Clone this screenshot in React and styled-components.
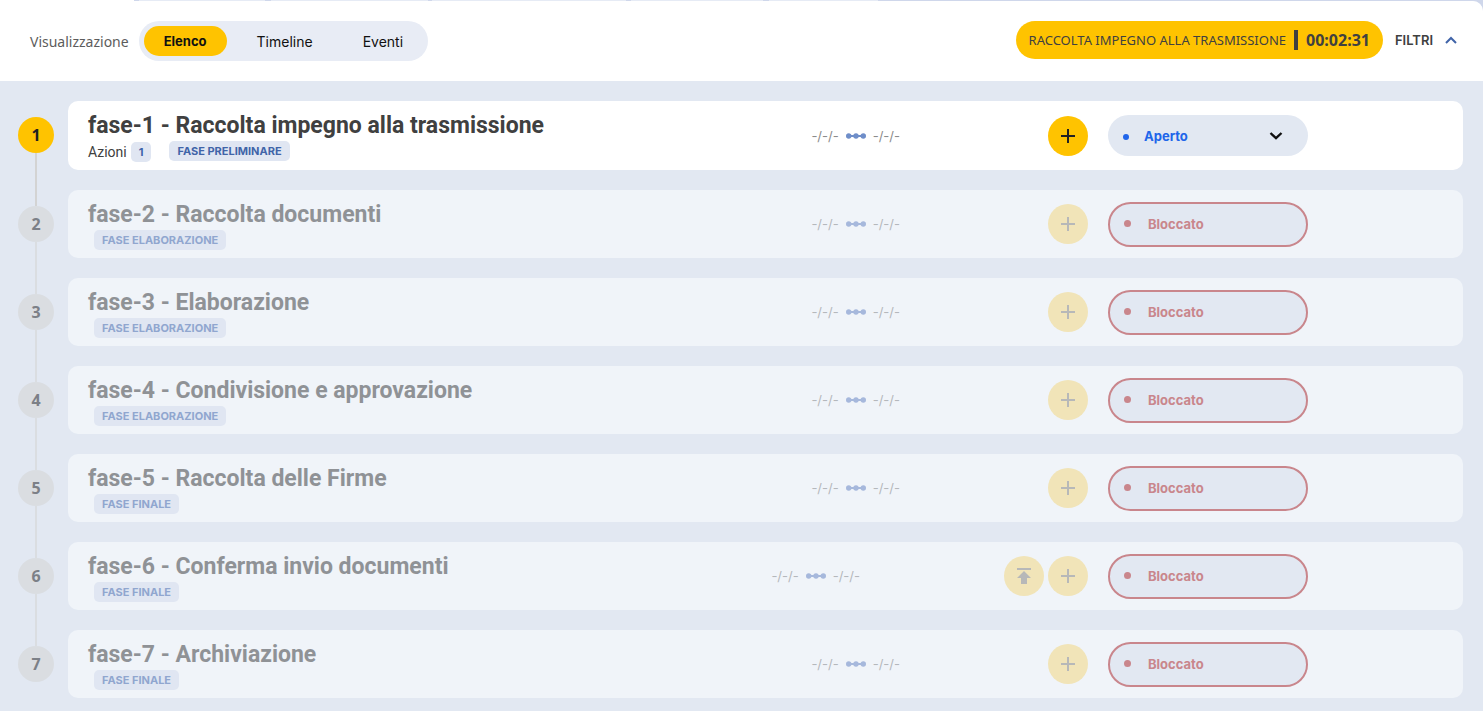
import React, { useState } from "react";
import styled, { createGlobalStyle } from "styled-components";

const fonts = {
  ui: 'Inter, "Liberation Sans", sans-serif',
  text: 'Roboto, "Liberation Sans", sans-serif',
  label: '"Noto Sans", "Open Sans", sans-serif',
};

const GlobalStyle = createGlobalStyle`
  *, *::before, *::after { box-sizing: border-box; }
  body {
    margin: 0;
    background: #cfd7eb;
    color: #404040;
    font-family: ${fonts.ui};
    font-size: 13px;
  }
  button, select { font: inherit; color: inherit; }
`;

const Page = styled.div`
  display: flex;
  flex-direction: column;
  min-height: 100vh;
`;

const TabStrip = styled.div`
  display: flex;
  height: 1px;
`;

const TabEdge = styled.span`
  width: ${(p) => p.$width}px;
  background: ${(p) => p.$tone};
`;

const Panel = styled.main`
  flex: 1;
  background: #e2e8f2;
  border-radius: 0 10px 6px 6px;
  overflow: hidden;
`;

const Header = styled.header`
  display: flex;
  justify-content: space-between;
  padding: 20px 26px 20px 30px;
  background: #fff;
`;

const HeaderGroup = styled.div`
  display: flex;
  align-items: center;
  gap: ${(p) => p.$gap}px;
  height: ${(p) => p.$height}px;
`;

const ViewLabel = styled.span`
  font-family: ${fonts.label};
  font-size: 14px;
  color: #5c5c5c;
`;

const Segmented = styled.div`
  display: flex;
  gap: 10px;
  padding: 5px;
  border-radius: 20px;
  background: #e8ecf5;
`;

const Segment = styled.button`
  height: 30px;
  padding: 0 20px;
  border: 0;
  border-radius: 15px;
  background: ${(p) => (p.$active ? "#ffc300" : "transparent")};
  color: #111;
  font-size: ${(p) => (p.$active ? 13 : 14)}px;
  font-weight: ${(p) => (p.$active ? 700 : 400)};
  cursor: pointer;
`;

const TimerPill = styled.div`
  display: flex;
  align-items: center;
  gap: 8px;
  height: 38px;
  padding: 0 13px;
  border-radius: 19px;
  background: #ffc300;
`;

const TimerLabel = styled.span`
  font-family: ${fonts.label};
  font-size: 13px;
`;

const TimerBar = styled.span`
  width: 4px;
  height: 20px;
  background: #404040;
`;

const TimerValue = styled.span`
  font-family: ${fonts.label};
  font-size: 16px;
  font-weight: 700;
`;

const FilterButton = styled.button`
  display: flex;
  align-items: center;
  gap: 12px;
  padding: 0;
  border: 0;
  background: none;
  font-weight: 600;
  cursor: pointer;
`;

const PhaseList = styled.ol`
  margin: 0;
  padding: 20px 20px 0 18px;
  list-style: none;
`;

const Phase = styled.li`
  display: flex;
  gap: 14px;
`;

const StepColumn = styled.div`
  display: flex;
  flex-direction: column;
  align-items: center;
  width: 36px;
`;

const StepLine = styled.span`
  width: 2px;
  height: 16px;
  flex-grow: ${(p) => (p.$grow ? 1 : 0)};
  background: ${(p) => (p.$hidden ? "transparent" : p.$strong ? "#d3d3d3" : "#dadde1")};
`;

const StepCircle = styled.span`
  display: flex;
  align-items: center;
  justify-content: center;
  width: 36px;
  height: 36px;
  border-radius: 50%;
  background: ${(p) => (p.$active ? "#ffc300" : "#dadde1")};
  color: ${(p) => (p.$active ? "#222" : "#7c8087")};
  font-family: ${fonts.label};
  font-size: 16px;
  font-weight: 700;
`;

const Card = styled.article`
  display: flex;
  flex: 1;
  align-items: center;
  margin-bottom: 20px;
  padding: 0 155px 0 20px;
  border-radius: 10px;
  background: ${(p) => (p.$active ? "#fff" : "#f0f4f9")};
`;

const Summary = styled.div`
  display: flex;
  flex: 1;
  flex-direction: column;
  padding: 10px 0 8px;
`;

const Title = styled.h2`
  margin: 0;
  color: ${(p) => (p.$active ? "#404040" : "#8f9296")};
  font-family: ${fonts.text};
  font-size: 23px;
  font-weight: 700;
  line-height: 30px;
`;

const Meta = styled.div`
  display: flex;
  align-items: flex-start;
  padding-left: ${(p) => (p.$indent ? 6 : 0)}px;
  gap: 18px;
`;

const Actions = styled.span`
  display: flex;
  align-items: center;
  gap: 4px;
  height: 21px;
  font-family: ${fonts.text};
  font-size: 14px;
`;

const Badge = styled.span`
  padding: 0 8px;
  border-radius: 5px;
  background: #e0e6f2;
  color: ${(p) => (p.$active ? "#4064a8" : "#90a6cf")};
  font-family: ${fonts.ui};
  font-size: 11px;
  font-weight: 700;
  line-height: 20px;
`;

const Dates = styled.div`
  display: flex;
  align-items: center;
  gap: 7px;
  margin-right: 144px;
  color: ${(p) => (p.$active ? "#8c8c8c" : "#b5b8bc")};
  font-size: 13px;
`;

const ButtonSet = styled.div`
  display: flex;
  justify-content: flex-end;
  gap: 4px;
  min-width: 44px;
  margin-right: 20px;
`;

const RoundButton = styled.button`
  display: flex;
  align-items: center;
  justify-content: center;
  width: 40px;
  height: 40px;
  padding: 0;
  border: 0;
  border-radius: 50%;
  background: ${(p) => (p.disabled ? "#f1e4b8" : "#ffc300")};
  color: ${(p) => (p.disabled ? "#b7b8b8" : "#222")};
`;

const StatusBox = styled.div`
  position: relative;
  width: 200px;
`;

const StatusSelect = styled.select`
  display: block;
  width: 100%;
  height: ${(p) => (p.disabled ? 45 : 41)}px;
  padding: 0 ${(p) => (p.disabled ? 38 : 36)}px;
  border: ${(p) => (p.disabled ? "2px solid #c9868c" : "0")};
  border-radius: 23px;
  background: #e2e8f2;
  color: ${(p) => (p.disabled ? "#c9868c" : "#2065ea")};
  font-weight: 700;
  opacity: 1;
  appearance: none;
`;

const StatusDot = styled.span`
  position: absolute;
  top: 50%;
  left: ${(p) => (p.$active ? 15 : 16)}px;
  width: ${(p) => (p.$active ? 6 : 7)}px;
  height: ${(p) => (p.$active ? 6 : 7)}px;
  margin-top: ${(p) => (p.$active ? -2 : -4)}px;
  border-radius: 50%;
  background: ${(p) => (p.$active ? "#2065ea" : "#c9868c")};
  pointer-events: none;
`;

const StatusArrow = styled.span`
  position: absolute;
  top: 0;
  right: 25px;
  bottom: 0;
  display: flex;
  align-items: center;
  pointer-events: none;
`;

const ChevronUp = () => (
  <svg width="12" height="8" viewBox="0 0 12 8" fill="none" stroke="#4064a8" strokeWidth="2" aria-hidden="true">
    <path d="M1 7l5-5 5 5" />
  </svg>
);

const ChevronDown = () => (
  <svg width="14" height="8" viewBox="0 0 14 8" fill="none" stroke="#111" strokeWidth="2.4" aria-hidden="true">
    <path d="M1.5 1l5.5 5.2L12.5 1" />
  </svg>
);

const PlusIcon = () => (
  <svg width="16" height="16" viewBox="0 0 16 16" fill="none" stroke="currentColor" strokeWidth="2" aria-hidden="true">
    <path d="M8 1v14M1 8h14" />
  </svg>
);

const UploadIcon = () => (
  <svg width="16" height="18" viewBox="0 0 16 18" fill="currentColor" aria-hidden="true">
    <path d="M1 1h14v2H1zM8 4l7 7h-4v6H5v-6H1z" />
  </svg>
);

const RangeIcon = ({ active }) => (
  <svg width="20" height="6" viewBox="0 0 20 6" fill={active ? "#6f8ec9" : "#a6b8dc"} aria-hidden="true">
    <path d="M2 2h16v2H2z" />
    <circle cx="2.7" cy="3" r="2.7" />
    <circle cx="10" cy="3" r="2.7" />
    <circle cx="17.3" cy="3" r="2.7" />
  </svg>
);

const views = ["Elenco", "Timeline", "Eventi"];

const strip = [
  [134, "#fff"],
  [5, "#cfd7eb"],
  [126, "#e6ebf5"],
  [6, "#cfd7eb"],
  [157, "#e6ebf5"],
  [4, "#cfd7eb"],
  [194, "#e6ebf5"],
  [5, "#cfd7eb"],
  [132, "#e6ebf5"],
  [6, "#cfd7eb"],
  [109, "#e6ebf5"],
];

const phases = [
  { title: "fase-1 - Raccolta impegno alla trasmissione", stage: "FASE PRELIMINARE", actions: 1, open: true },
  { title: "fase-2 - Raccolta documenti", stage: "FASE ELABORAZIONE" },
  { title: "fase-3 - Elaborazione", stage: "FASE ELABORAZIONE" },
  { title: "fase-4 - Condivisione e approvazione", stage: "FASE ELABORAZIONE" },
  { title: "fase-5 - Raccolta delle Firme", stage: "FASE FINALE" },
  { title: "fase-6 - Conferma invio documenti", stage: "FASE FINALE", upload: true },
  { title: "fase-7 - Archiviazione", stage: "FASE FINALE" },
];

function PhaseRow({ phase, index }) {
  const { title, stage, actions, open, upload } = phase;
  return (
    <Phase>
      <StepColumn>
        <StepLine $hidden={index === 0} $strong={index === 1} />
        <StepCircle $active={open}>{index + 1}</StepCircle>
        <StepLine $grow $strong={open} $hidden={index === phases.length - 1} />
      </StepColumn>
      <Card $active={open}>
        <Summary>
          <Title $active={open}>{title}</Title>
          <Meta $indent={!actions}>
            {actions && (
              <Actions>
                Azioni <Badge $active>{actions}</Badge>
              </Actions>
            )}
            <Badge $active={open}>{stage}</Badge>
          </Meta>
        </Summary>
        <Dates $active={open}>
          <span>-/-/-</span>
          <RangeIcon active={open} />
          <span>-/-/-</span>
        </Dates>
        <ButtonSet>
          {upload && (
            <RoundButton type="button" disabled aria-label="Carica">
              <UploadIcon />
            </RoundButton>
          )}
          <RoundButton type="button" disabled={!open} aria-label="Aggiungi">
            <PlusIcon />
          </RoundButton>
        </ButtonSet>
        <StatusBox>
          <StatusSelect aria-label={`Stato ${title}`} disabled={!open}>
            <option>{open ? "Aperto" : "Bloccato"}</option>
          </StatusSelect>
          <StatusDot $active={open} />
          {open && (
            <StatusArrow>
              <ChevronDown />
            </StatusArrow>
          )}
        </StatusBox>
      </Card>
    </Phase>
  );
}

export default function App() {
  const [view, setView] = useState("Elenco");
  return (
    <Page>
      <GlobalStyle />
      <TabStrip>
        {strip.map(([width, tone], i) => (
          <TabEdge key={i} $width={width} $tone={tone} />
        ))}
      </TabStrip>
      <Panel>
        <Header>
          <HeaderGroup $height={40} $gap={10}>
            <ViewLabel id="view-label">Visualizzazione</ViewLabel>
            <Segmented role="group" aria-labelledby="view-label">
              {views.map((name) => (
                <Segment key={name} type="button" $active={view === name} onClick={() => setView(name)}>
                  {name}
                </Segment>
              ))}
            </Segmented>
          </HeaderGroup>
          <HeaderGroup $height={38} $gap={12}>
            <TimerPill>
              <TimerLabel>RACCOLTA IMPEGNO ALLA TRASMISSIONE</TimerLabel>
              <TimerBar />
              <TimerValue>00:02:31</TimerValue>
            </TimerPill>
            <FilterButton type="button">
              FILTRI <ChevronUp />
            </FilterButton>
          </HeaderGroup>
        </Header>
        <PhaseList>
          {phases.map((phase, i) => (
            <PhaseRow key={phase.title} phase={phase} index={i} />
          ))}
        </PhaseList>
      </Panel>
    </Page>
  );
}
